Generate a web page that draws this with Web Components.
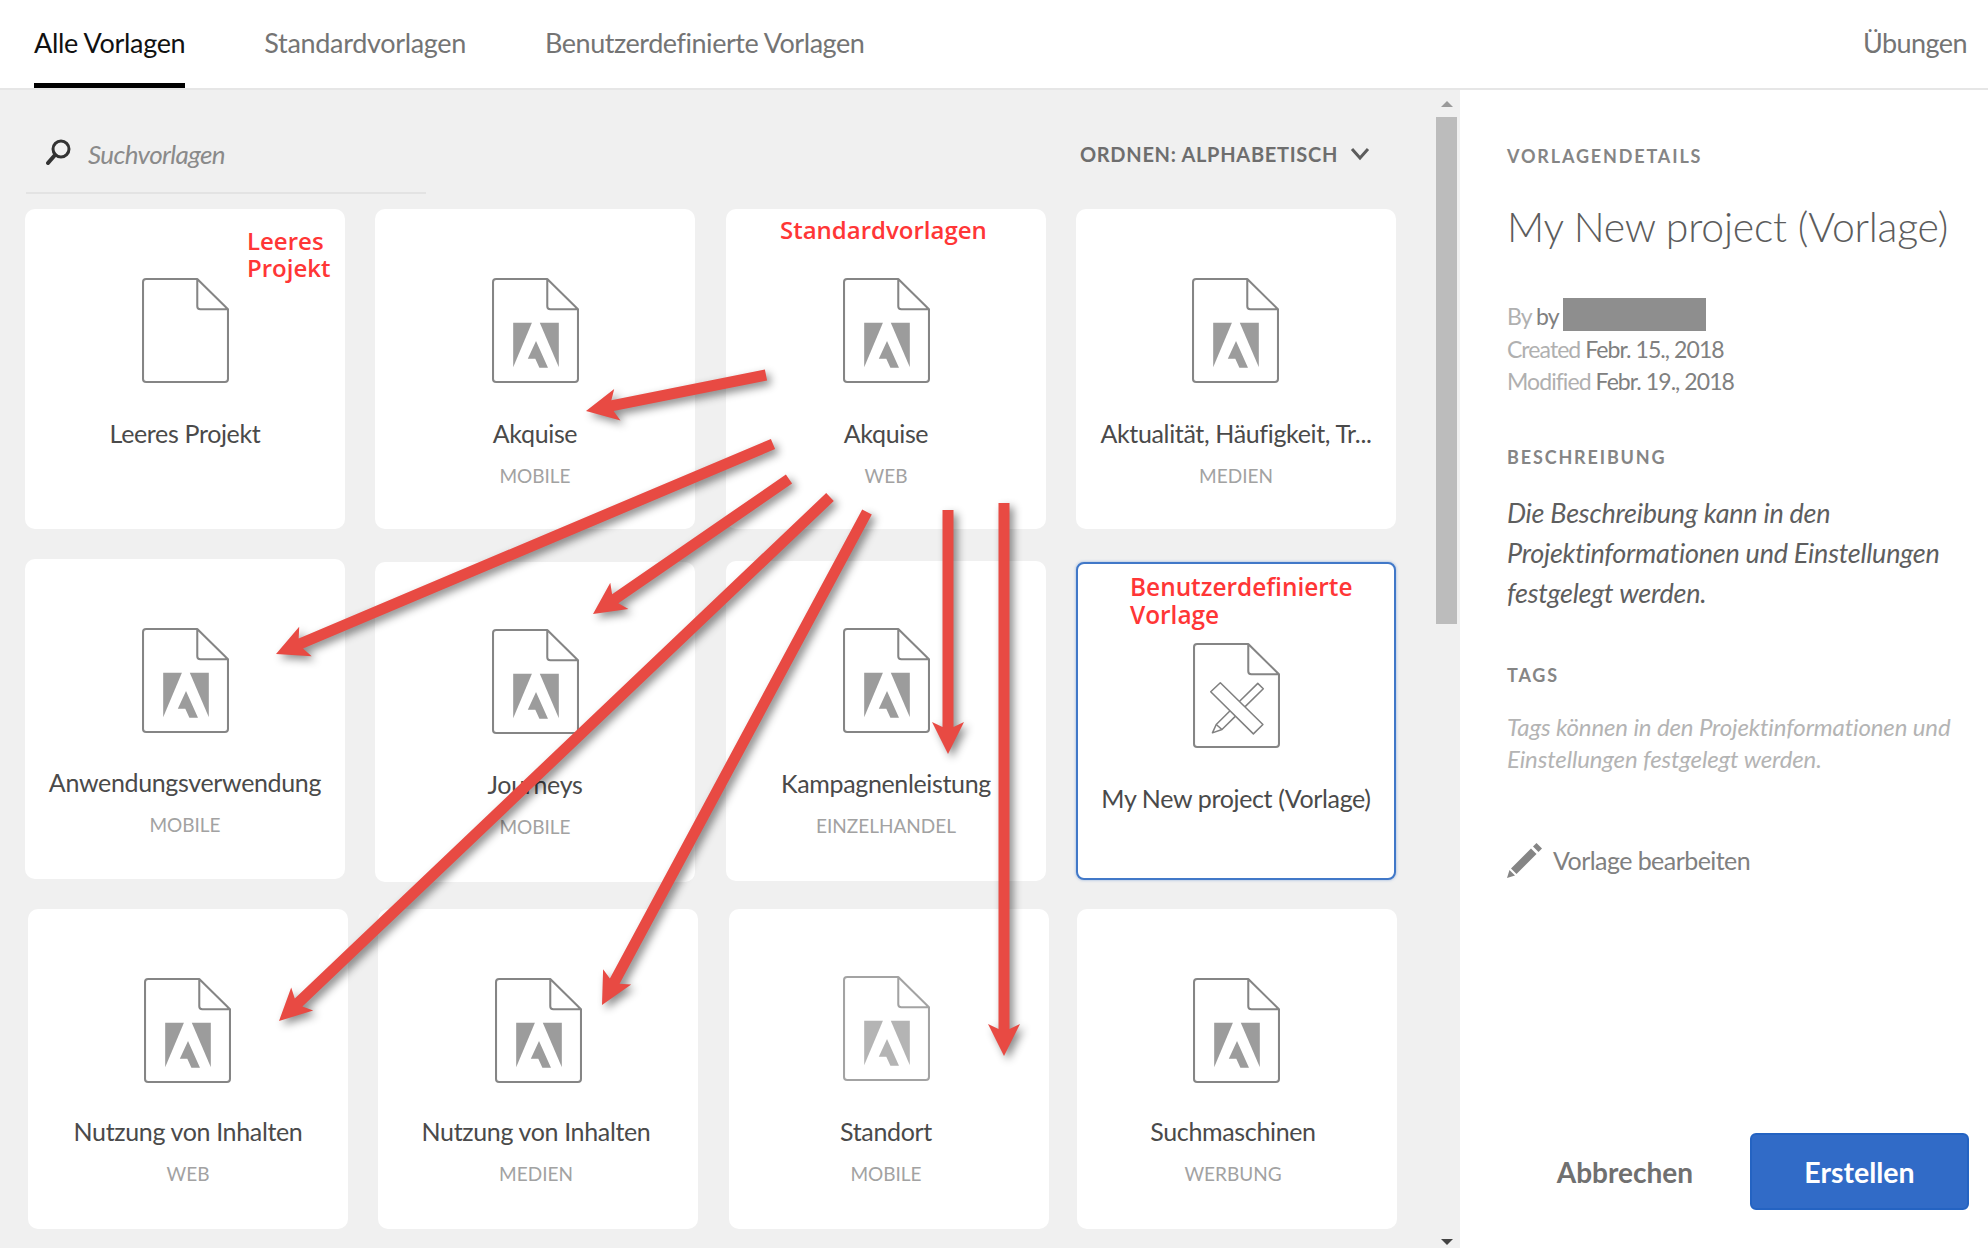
<!DOCTYPE html>
<html lang="de">
<head>
<meta charset="utf-8">
<title>Vorlagen</title>
<style>
  html, body { margin: 0; height: 1248px; overflow: hidden; background: #fff; font-family: Lato, "Liberation Sans", sans-serif; }
</style>
</head>
<body>
<tpl-app>
  <tpl-tabs slot="tabs"></tpl-tabs>
  <tpl-gallery slot="gallery">
    <tpl-card kind="blank" name="Leeres Projekt" ty="1"></tpl-card>
    <tpl-card name="Akquise" sub="MOBILE" ty="1"></tpl-card>
    <tpl-card name="Akquise" sub="WEB" dx="1" ty="1"></tpl-card>
    <tpl-card name="Aktualität, Häufigkeit, Tr..." sub="MEDIEN" dx="1" ix="-1" ty="1"></tpl-card>

    <tpl-card name="Anwendungsverwendung" sub="MOBILE"></tpl-card>
    <tpl-card name="Journeys" sub="MOBILE" dy="3" iy="-2" ty="-1"></tpl-card>
    <tpl-card name="Kampagnenleistung" sub="EINZELHANDEL" dx="1" dy="2" iy="-2" ty="-1"></tpl-card>
    <tpl-card kind="custom" name="My New project (Vorlage)" dx="1" dy="3" selected></tpl-card>

    <tpl-card name="Nutzung von Inhalten" sub="WEB" dx="3" ix="-1" ty="-1"></tpl-card>
    <tpl-card name="Nutzung von Inhalten" sub="MEDIEN" dx="3" tx="-2" ty="-1"></tpl-card>
    <tpl-card name="Standort" sub="MOBILE" dx="4" ix="-3" iy="-2" tx="-3" ty="-1" faded></tpl-card>
    <tpl-card name="Suchmaschinen" sub="WERBUNG" dx="2" ix="-1" tx="-4" ty="-1"></tpl-card>
  </tpl-gallery>
  <tpl-details slot="details"></tpl-details>
  <tpl-arrows slot="over"></tpl-arrows>
  <tpl-note slot="over" x="247" y="228" style="font-size:24px;line-height:26.5px">Leeres<br>Projekt</tpl-note>
  <tpl-note slot="over" x="780" y="216" style="font-size:24px">Standardvorlagen</tpl-note>
  <tpl-note slot="over" x="1130" y="573">Benutzerdefinierte<br>Vorlage</tpl-note>
</tpl-app>

<script>
const DOC_PATH = "M4 1H54L84 31V100a3 3 0 0 1-3 3H4a3 3 0 0 1-3-3V4a3 3 0 0 1 3-3Z M54 1V28a3 3 0 0 0 3 3H84";
const ADOBE_LOGO = `
  <polygon points="20.7,44.3 39,44.3 20.7,88.3" />
  <polygon points="46.7,44.3 65.3,44.3 65.3,88.3" />
  <polygon points="43,62.3 54.7,89 46.3,89 42.3,80 35,80" />`;
const TOOLS_ICON = `
  <g fill="none" stroke="#808080" stroke-width="1.5" stroke-linejoin="round">
    <polygon points="17.3,48.3 26.7,39.3 68.3,80.7 59,90" />
    <polyline points="45.3,58 63.3,40 68.7,45.3 50.7,63.3" />
    <polyline points="36,67.3 22.7,80.7 19,89 28.3,85.7 41.3,72.7" />
    <line x1="22.7" y1="80.7" x2="28.3" y2="85.7" />
  </g>`;

class TplApp extends HTMLElement {
  constructor() {
    super();
    this.attachShadow({ mode: "open" });
    this.shadowRoot.innerHTML = `
      <style>
        :host {
          display: grid;
          position: relative;
          width: 1988px;
          height: 1248px;
          grid-template-columns: 1460px 528px;
          grid-template-rows: 90px 1158px;
          overflow: hidden;
        }
        .tabs { grid-column: 1 / 3; display: block; }
      </style>
      <slot name="tabs" class="tabs"></slot>
      <slot name="gallery"></slot>
      <slot name="details"></slot>
      <slot name="over"></slot>
    `;
  }
}
customElements.define("tpl-app", TplApp);

class TplTabs extends HTMLElement {
  constructor() {
    super();
    this.attachShadow({ mode: "open" });
    this.shadowRoot.innerHTML = `
      <style>
        :host {
          display: flex;
          box-sizing: border-box;
          height: 90px;
          padding: 0 21px 0 34px;
          gap: 79px;
          border-bottom: 2px solid #e6e6e6;
          font-size: 27px;
          letter-spacing: -0.32px;
          color: #747474;
        }
        div {
          box-sizing: border-box;
          height: 88px;
          line-height: 85px;
          white-space: nowrap;
        }
        .on {
          color: #111;
          border-bottom: 5px solid #000;
        }
        .long { letter-spacing: -0.46px; }
        .end { margin-left: auto; letter-spacing: -0.55px; }
      </style>
      <div class="on">Alle Vorlagen</div>
      <div>Standardvorlagen</div>
      <div class="long">Benutzerdefinierte Vorlagen</div>
      <div class="end">Übungen</div>
    `;
  }
}
customElements.define("tpl-tabs", TplTabs);

class TplGallery extends HTMLElement {
  constructor() {
    super();
    this.attachShadow({ mode: "open" });
    this.shadowRoot.innerHTML = `
      <style>
        :host {
          display: grid;
          grid-template-columns: 1fr 24px;
          height: 1158px;
          background: #f0f0f0;
          overflow: hidden;
        }
        .top {
          display: flex;
          align-items: flex-start;
          justify-content: space-between;
          height: 119px;
          padding-right: 66px;
        }
        .search {
          display: flex;
          align-items: center;
          box-sizing: border-box;
          width: 400px;
          height: 104px;
          margin-left: 26px;
          padding: 25px 0 0 20px;
          gap: 16px;
          border-bottom: 2px solid #e3e3e3;
          font-size: 26px;
          font-style: italic;
          letter-spacing: -0.6px;
          color: #8a8a8a;
        }
        .search svg { margin-top: -4px; }
        .sort {
          display: flex;
          align-items: center;
          height: 104px;
          padding-top: 24px;
          box-sizing: border-box;
          gap: 12px;
          font-size: 20px;
          font-weight: 700;
          letter-spacing: 0.7px;
          color: #6e6e6e;
        }
        .grid {
          display: grid;
          grid-template-columns: repeat(4, 320px);
          grid-auto-rows: 320px;
          gap: 30px;
          padding-left: 25px;
        }
        .bar {
          display: flex;
          flex-direction: column;
          align-items: flex-start;
        }
        .up { margin: 11px 0 0 5px; }
        .thumb {
          width: 21px;
          height: 507px;
          margin: 10px 0 0 0;
          background: #bcbcbc;
        }
        .down { margin: 615px 0 0 5px; }
      </style>
      <div>
        <div class="top">
          <div class="search">
            <svg width="26" height="26" viewBox="0 0 26 26" fill="none" stroke="#333" stroke-width="3">
              <circle cx="15" cy="10" r="8" />
              <line x1="9" y1="16" x2="2" y2="24" stroke-width="4" stroke-linecap="round" />
            </svg>
            <span>Suchvorlagen</span>
          </div>
          <div class="sort">
            <span>ORDNEN: ALPHABETISCH</span>
            <svg width="20" height="14" viewBox="0 0 20 14" fill="none" stroke="#5c5c5c" stroke-width="3">
              <polyline points="2,2 10,11 18,2" />
            </svg>
          </div>
        </div>
        <div class="grid"><slot></slot></div>
      </div>
      <div class="bar">
        <svg class="up" width="12" height="6" viewBox="0 0 12 6"><polygon points="6,0 12,6 0,6" fill="#9a9a9a" /></svg>
        <div class="thumb"></div>
        <svg class="down" width="12" height="6" viewBox="0 0 12 6"><polygon points="0,0 12,0 6,6" fill="#444" /></svg>
      </div>
    `;
  }
}
customElements.define("tpl-gallery", TplGallery);

class TplCard extends HTMLElement {
  constructor() {
    super();
    this.attachShadow({ mode: "open" });
    const kind = this.getAttribute("kind");
    const sub = this.getAttribute("sub");
    // the source is a pasted-together screenshot: some cards sit a few px off
    const num = (name) => Number(this.getAttribute(name) || 0);
    let inner = `<g fill="#9c9c9c">${ADOBE_LOGO}</g>`;
    if (kind === "blank") inner = "";
    if (kind === "custom") inner = TOOLS_ICON;
    this.shadowRoot.innerHTML = `
      <style>
        :host {
          display: flex;
          flex-direction: column;
          align-items: center;
          box-sizing: border-box;
          width: 320px;
          height: 320px;
          padding-top: 69px;
          background: #fff;
          border-radius: 10px;
          color: #4a4a4a;
          --name-gap: 33px;
        }
        :host([selected]) {
          height: 318px;
          padding-top: 79px;
          border: 2px solid #4178c8;
          box-shadow: 0 0 3px rgba(65, 120, 200, .55);
          border-radius: 8px;
          --name-gap: 33.5px;
        }
        :host([faded]) svg { opacity: .75; }
        svg {
          display: block;
          flex: none;
          margin-left: ${num("ix") * 2}px;
          margin-top: ${num("iy")}px;
        }
        .name {
          margin-top: calc(var(--name-gap) + ${num("ty") - num("iy")}px);
          margin-left: ${num("tx") * 2}px;
          font-size: 25px;
          line-height: 32px;
          letter-spacing: -0.35px;
          white-space: nowrap;
        }
        .sub {
          margin-top: 15px;
          margin-left: ${num("tx") * 2}px;
          font-size: 19px;
          line-height: 24px;
          color: #a2a2a2;
        }
      </style>
      <svg width="87" height="105" viewBox="0 0 85 104" preserveAspectRatio="none">
        <path d="${DOC_PATH}" fill="#fff" stroke="#858585" stroke-width="2" stroke-linejoin="round" />
        ${inner}
      </svg>
      <div class="name">${this.getAttribute("name")}</div>
      ${sub ? `<div class="sub">${sub}</div>` : ""}
    `;
    this.style.marginLeft = `${num("dx")}px`;
    this.style.marginTop = `${num("dy")}px`;
  }
}
customElements.define("tpl-card", TplCard);

class TplDetails extends HTMLElement {
  constructor() {
    super();
    this.attachShadow({ mode: "open" });
    this.shadowRoot.innerHTML = `
      <style>
        :host {
          display: flex;
          flex-direction: column;
          box-sizing: border-box;
          height: 1158px;
          padding: 54px 19px 38px 47px;
          background: #fff;
          color: #808080;
        }
        h4 {
          margin: 0;
          font-size: 18px;
          line-height: 24px;
          font-weight: 700;
          letter-spacing: 1.85px;
          color: #858585;
        }
        h1 {
          margin: 33px 0 0;
          font-size: 41px;
          line-height: 52px;
          font-weight: 300;
          letter-spacing: -0.25px;
          color: #5c5c5c;
          white-space: nowrap;
        }
        .meta {
          margin-top: 47px;
          font-size: 23px;
          line-height: 32.5px;
          letter-spacing: -0.93px;
          color: #b0b0b0;
        }
        .meta b { font-weight: 400; color: #808080; }
        .by { display: flex; gap: 6px; }
        .hide { width: 143px; height: 33px; margin-left: -2px; margin-top: -2px; background: #8e8e8e; }
        .desc {
          margin: 24px 0 0;
          font-size: 27px;
          line-height: 40px;
          font-style: italic;
          letter-spacing: -0.24px;
          color: #5e5e5e;
        }
        .tags {
          margin: 24px 0 0;
          font-size: 24px;
          line-height: 32.5px;
          font-style: italic;
          letter-spacing: -0.13px;
          color: #b4b4b4;
        }
        .edit {
          display: flex;
          align-items: center;
          gap: 10px;
          margin-top: 66px;
          font-size: 25px;
          letter-spacing: -0.55px;
          color: #808080;
        }
        .foot {
          display: flex;
          align-items: center;
          justify-content: flex-end;
          gap: 57px;
          margin-top: auto;
        }
        .cancel { font-size: 28px; font-weight: 700; letter-spacing: 0; color: #707070; }
        .create {
          box-sizing: border-box;
          width: 219px;
          height: 77px;
          border: 2px solid #2463c2;
          border-radius: 6px;
          background: #316bc7;
          color: #fff;
          font-size: 28.5px;
          font-weight: 700;
          letter-spacing: 0;
          line-height: 75px;
          text-align: center;
        }
      </style>
      <h4>VORLAGENDETAILS</h4>
      <h1>My New project (Vorlage)</h1>
      <div class="meta">
        <div class="by"><span>By <b>by</b></span><span class="hide"></span></div>
        <div>Created <b>Febr. 15., 2018</b></div>
        <div>Modified <b>Febr. 19., 2018</b></div>
      </div>
      <h4 style="margin-top:47px">BESCHREIBUNG</h4>
      <p class="desc">Die Beschreibung kann in den<br>Projektinformationen und Einstellungen<br>festgelegt werden.</p>
      <h4 style="margin-top:50px">TAGS</h4>
      <p class="tags">Tags können in den Projektinformationen und<br>Einstellungen festgelegt werden.</p>
      <div class="edit">
        <svg width="36" height="36" viewBox="0 0 36 36" fill="#858585">
          <polygon points="0,36 2.5,28 8,33.5" />
          <polygon points="4,26.5 24,6.5 29.5,12 9.5,32" />
          <polygon points="26,4.5 29.5,1 35,6.5 31.5,10" />
        </svg>
        <span>Vorlage bearbeiten</span>
      </div>
      <div class="foot">
        <span class="cancel">Abbrechen</span>
        <div class="create">Erstellen</div>
      </div>
    `;
  }
}
customElements.define("tpl-details", TplDetails);

// red annotations laid over the screenshot
class TplNote extends HTMLElement {
  constructor() {
    super();
    this.attachShadow({ mode: "open" });
    this.shadowRoot.innerHTML = `
      <style>
        :host {
          display: block;
          position: absolute;
          font-family: "Open Sans", sans-serif;
          font-size: 24.4px;
          line-height: 27.5px;
          font-weight: 600;
          color: #ff3636;
          white-space: nowrap;
        }
      </style>
      <slot></slot>
    `;
    this.style.left = `${this.getAttribute("x")}px`;
    this.style.top = `${this.getAttribute("y")}px`;
  }
}
customElements.define("tpl-note", TplNote);

class TplArrows extends HTMLElement {
  constructor() {
    super();
    this.attachShadow({ mode: "open" });
    const arrows = [
      [766, 375, 586, 411],
      [773, 444, 276, 654],
      [789, 479, 593, 614],
      [830, 497, 279, 1021],
      [867, 512, 602, 1005],
      [948, 510, 948, 754],
      [1004, 503, 1004, 1056],
    ];
    this.shadowRoot.innerHTML = `
      <style>
        :host { display: block; position: absolute; left: 0; top: 0; pointer-events: none; }
        svg { display: block; filter: drop-shadow(4px 4px 4px rgba(0, 0, 0, .45)); }
      </style>
      <svg width="1988" height="1248" viewBox="0 0 1988 1248">
        ${arrows.map((a) => `<polygon points="${this.arrow(...a)}" fill="#e84a43" />`).join("")}
      </svg>
    `;
  }

  arrow(x1, y1, x2, y2) {
    const len = Math.hypot(x2 - x1, y2 - y1);
    const ux = (x2 - x1) / len;
    const uy = (y2 - y1) / len;
    const at = (along, side) =>
      `${(x2 - ux * along - uy * side).toFixed(1)},${(y2 - uy * along + ux * side).toFixed(1)}`;
    return [
      at(0, 0),
      at(32, 16),
      at(27, 5.5),
      at(len, 5.5),
      at(len, -5.5),
      at(27, -5.5),
      at(32, -16),
    ].join(" ");
  }
}
customElements.define("tpl-arrows", TplArrows);
</script>
</body>
</html>
